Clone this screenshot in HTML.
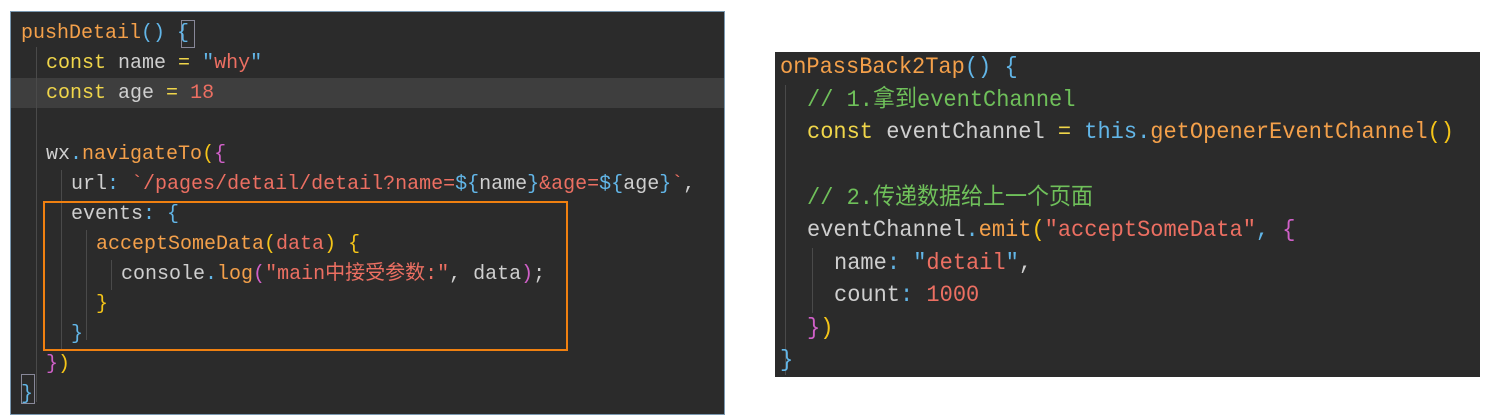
<!DOCTYPE html>
<html><head><meta charset="utf-8"><style>
body{margin:0;width:1494px;height:420px;background:#fff;position:relative;overflow:hidden}
.p{position:absolute;background:#2b2b2b;font-family:"Liberation Mono","Noto Sans CJK SC",monospace;white-space:pre;color:#cfcfcf}
#L{left:10px;top:11px;width:715px;height:404px;border:1px solid #7a98b0;box-sizing:border-box;font-size:20px}
#R{left:775px;top:52px;width:705px;height:325px;font-size:22px}
.ln{position:absolute;left:0;height:30px;line-height:30px}
#R .ln{height:32.6px;line-height:32.6px;transform:scaleY(1.05);transform-origin:left center}
.k{color:#f0d64a}.f{color:#f4a04a}.s{color:#ec6f62}.b{color:#62b6e8}.m{color:#d060c8}.y{color:#f5c518}.c{color:#6fc05a}.w{color:#cfcfcf}
.g{position:absolute;width:1px;background:#4a4a4a}
</style></head><body>
<div class="p" id="L">
<div style="position:absolute;left:0;right:0;top:66px;height:30px;background:#3e3e3e"></div>
<div class="g" style="left:25px;top:35px;height:355px"></div>
<div class="g" style="left:50px;top:158px;height:180px"></div>
<div class="g" style="left:75px;top:218px;height:110px"></div>
<div class="g" style="left:100px;top:248px;height:30px"></div>
<div style="position:absolute;left:170px;top:8px;width:12px;height:26px;border:1px solid #889"></div>
<div style="position:absolute;left:10px;top:362px;width:12px;height:28px;border:1px solid #889"></div>
<div style="position:absolute;left:32px;top:189px;width:525px;height:150px;border:2px solid #f08010;box-sizing:border-box"></div>
<div class="ln" style="left:10px;top:7px"><span class="f">pushDetail</span><span class="b">() {</span></div>
<div class="ln" style="left:35px;top:37px"><span class="k">const</span> name <span class="k">=</span> <span class="b">"</span><span class="s">why</span><span class="b">"</span></div>
<div class="ln" style="left:35px;top:67px"><span class="k">const</span> age <span class="k">=</span> <span class="s">18</span></div>
<div class="ln" style="left:35px;top:128px">wx<span class="b">.</span><span class="f">navigateTo</span><span class="y">(</span><span class="m">{</span></div>
<div class="ln" style="left:60px;top:158px">url<span class="b">:</span> <span class="s">`/pages/detail/detail?name=</span><span class="b">${</span>name<span class="b">}</span><span class="s">&amp;age=</span><span class="b">${</span>age<span class="b">}</span><span class="s">`</span>,</div>
<div class="ln" style="left:60px;top:188px">events<span class="b">: {</span></div>
<div class="ln" style="left:85px;top:218px"><span class="f">acceptSomeData</span><span class="y">(</span><span class="s">data</span><span class="y">)</span> <span class="y">{</span></div>
<div class="ln" style="left:110px;top:248px">console<span class="b">.</span><span class="f">log</span><span class="m">(</span><span class="s">"main中接受参数:"</span>, data<span class="m">)</span>;</div>
<div class="ln" style="left:85px;top:278px"><span class="y">}</span></div>
<div class="ln" style="left:60px;top:308px"><span class="b">}</span></div>
<div class="ln" style="left:35px;top:338px"><span class="m">}</span><span class="y">)</span></div>
<div class="ln" style="left:10px;top:368px"><span class="b">}</span></div>
</div>
<div class="p" id="R">
<div class="g" style="left:10px;top:33px;height:290px"></div>
<div class="g" style="left:37px;top:196px;height:65px"></div>
<div class="ln" style="left:5px;top:0px"><span class="f">onPassBack2Tap</span><span class="b">() {</span></div>
<div class="ln" style="left:32px;top:33px"><span class="c">// 1.拿到eventChannel</span></div>
<div class="ln" style="left:32px;top:65px"><span class="k">const</span> eventChannel <span class="k">=</span> <span class="b">this.</span><span class="f">getOpenerEventChannel</span><span class="y">()</span></div>
<div class="ln" style="left:32px;top:131px"><span class="c">// 2.传递数据给上一个页面</span></div>
<div class="ln" style="left:32px;top:163px">eventChannel<span class="b">.</span><span class="f">emit</span><span class="y">(</span><span class="s">"acceptSomeData"</span><span class="b">,</span> <span class="m">{</span></div>
<div class="ln" style="left:59px;top:196px">name<span class="b">:</span> <span class="b">"</span><span class="s">detail</span><span class="b">"</span>,</div>
<div class="ln" style="left:59px;top:228px">count<span class="b">:</span> <span class="s">1000</span></div>
<div class="ln" style="left:32px;top:261px"><span class="m">}</span><span class="y">)</span></div>
<div class="ln" style="left:5px;top:293px"><span class="b">}</span></div>
</div>
</body></html>
